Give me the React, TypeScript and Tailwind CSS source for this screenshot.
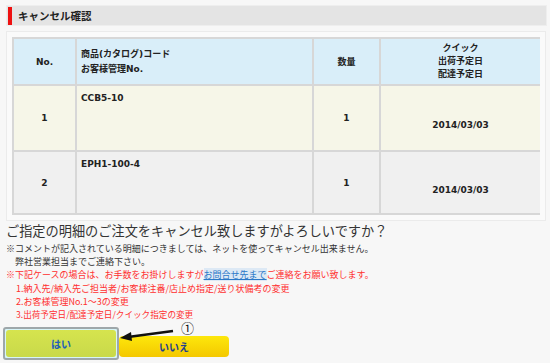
import React from "react";

const font = { fontFamily: '"DejaVu Sans", "Noto Sans CJK JP", sans-serif' };
const jp = { fontFamily: '"Noto Sans CJK JP", "DejaVu Sans", sans-serif' };

const rows = [
  { no: "1", code: "CCB5-10", qty: "1", date: "2014/03/03", bg: "bg-[#f6f6e8]", h: "h-[64px]" },
  { no: "2", code: "EPH1-100-4", qty: "1", date: "2014/03/03", bg: "bg-[#f0f0f0]", h: "h-[61px]" },
];

const App = () => {
  return (
    <div className="relative h-[363px] w-[550px] overflow-hidden bg-[#f7f7f7] text-[#222]" style={font}>
      <div className="pt-[5px] pl-[6px]">
        <div className="flex h-[21px] w-[541px] items-center border border-[#eeeeee] bg-[#e4e4e4]">
          <div className="ml-[1px] h-[18px] w-[4px] bg-[#ee1111]" />
          <div className="ml-[6px] text-[10.5px] font-bold text-[#222]" style={jp}>
            キャンセル確認
          </div>
        </div>

        <div className="mt-[5px] w-[540px] border border-[#ebebeb] bg-[#fafafa] p-[5px]">
          <div className="grid grid-cols-[61px_235px_65px_159px] gap-[2px] bg-[#d7d7d7] p-[2px] text-[9px] font-bold leading-[14px]">
            <div className="flex h-[45px] items-center justify-center bg-[#d9eef9]">No.</div>
            <div className="flex flex-col justify-center bg-[#d9eef9] pl-[4px] leading-[15px]">
              <span>商品(カタログ)コード</span>
              <span>お客様管理No.</span>
            </div>
            <div className="flex items-center justify-center bg-[#d9eef9]">数量</div>
            <div className="flex flex-col items-center justify-center bg-[#d9eef9] leading-[13px]">
              <span>クイック</span>
              <span>出荷予定日</span>
              <span>配達予定日</span>
            </div>
            {rows.map((r) => (
              <React.Fragment key={r.no}>
                <div className={`flex items-center justify-center ${r.bg} ${r.h}`}>{r.no}</div>
                <div className={`${r.bg} pl-[4px] pt-[5px]`}>{r.code}</div>
                <div className={`flex items-center justify-center ${r.bg}`}>{r.qty}</div>
                <div className={`flex flex-col items-center justify-center ${r.bg}`}>
                  <span>&nbsp;</span>
                  <span>{r.date}</span>
                </div>
              </React.Fragment>
            ))}
          </div>
        </div>

        <div className="mt-[1px] text-[13.2px] leading-[18px] text-[#333]" style={jp}>
          ご指定の明細のご注文をキャンセル致しますがよろしいですか？
        </div>
        <div className="mt-[2px] text-[9px] leading-[13.2px]" style={jp}>
          <div className="text-[#333]">※コメントが記入されている明細につきましては、ネットを使ってキャンセル出来ません。</div>
          <div className="pl-[9px] text-[#333]">弊社営業担当までご連絡下さい。</div>
          <div className="text-[#ff2f2f]">
            ※下記ケースの場合は、お手数をお掛けしますが
            <span className="bg-[#dde9f5] text-[#2a78c8] underline">お問合せ先まで</span>
            ご連絡をお願い致します。
          </div>
          <div className="pl-[10px] text-[#ff2f2f]">1.納入先/納入先ご担当者/お客様注番/店止め指定/送り状備考の変更</div>
          <div className="pl-[10px] text-[#ff2f2f]">2.お客様管理No.1～3の変更</div>
          <div className="pl-[10px] text-[8.6px] text-[#ff2f2f]">3.出荷予定日/配達予定日/クイック指定の変更</div>
        </div>
      </div>

      <div className="mt-[6px] flex items-end pl-[3px]" style={jp}>
        <div className="rounded-[3px] border-2 border-[#9ea7aa] bg-[#d6f4f8] p-[1px]">
          <button
            type="button"
            className="flex h-[27px] w-[110px] items-center justify-center rounded-[3px] bg-gradient-to-b from-[#d6e44e] to-[#c8d94a] text-[10px] font-bold text-[#2060b8]"
          >
            はい
          </button>
        </div>
        <button
          type="button"
          className="mb-[3px] flex h-[21px] w-[110px] items-center justify-center rounded-[4px] bg-gradient-to-b from-[#fde70c] to-[#f4c800] text-[10px] font-bold text-[#1d3f8c]"
        >
          いいえ
        </button>
      </div>

      <svg className="absolute left-0 top-0" width="550" height="363">
        <line x1="173" y1="331" x2="128" y2="337" stroke="#111" strokeWidth="2.4" />
        <polygon points="120,338 131,332 132,341" fill="#111" />
      </svg>
      <div className="absolute left-[181px] top-[322px] text-[13px] leading-[12px] text-[#111]" style={jp}>
        ①
      </div>
    </div>
  );
};

export default App;
